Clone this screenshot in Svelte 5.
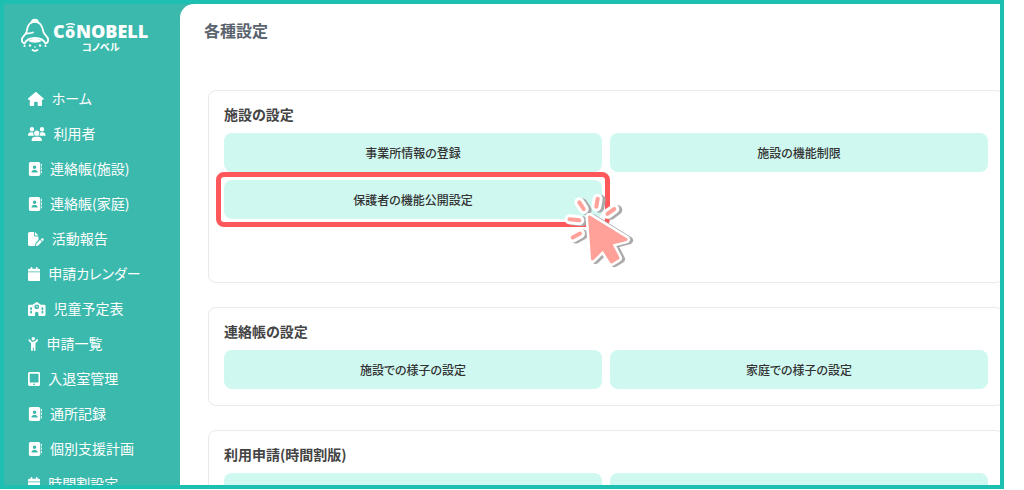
<script>
  const icons = {
    house: {
      width: 576,
      path: "M575.8 255.5c0 18-15 32.1-32 32.1h-32l.7 160.2c0 2.7-.2 5.4-.5 8.1V472c0 22.1-17.9 40-40 40H456c-1.1 0-2.2 0-3.3-.1c-1.4 .1-2.8 .1-4.2 .1H416 392c-22.1 0-40-17.9-40-40V448 384c0-17.7-14.3-32-32-32H256c-17.7 0-32 14.3-32 32v64 24c0 22.1-17.9 40-40 40H160 128.1c-1.5 0-3-.1-4.5-.2c-1.2 .1-2.4 .2-3.6 .2H104c-22.1 0-40-17.9-40-40V360c0-.9 0-1.9 .1-2.8V287.6H32c-18 0-32-14-32-32.1c0-9 3-17 10-24L266.4 8c7-7 15-8 22-8s15 2 21 7L564.8 231.5c8 7 12 15 11 24z",
    },
    users: {
      width: 640,
      path: "M144 0a80 80 0 1 1 0 160A80 80 0 1 1 144 0zM512 0a80 80 0 1 1 0 160A80 80 0 1 1 512 0zM0 298.7C0 239.8 47.8 192 106.7 192h42.7c15.9 0 31 3.5 44.6 9.7c-1.3 7.2-1.9 14.7-1.9 22.3c0 38.2 16.8 72.5 43.3 96c-.2 0-.4 0-.7 0H21.3C9.6 320 0 310.4 0 298.7zM405.3 320c-.2 0-.4 0-.7 0c26.6-23.5 43.3-57.8 43.3-96c0-7.6-.7-15-1.9-22.3c13.6-6.3 28.7-9.7 44.6-9.7h42.7C592.2 192 640 239.8 640 298.7c0 11.8-9.6 21.3-21.3 21.3H405.3zM224 224a96 96 0 1 1 192 0 96 96 0 1 1 -192 0zM128 485.3C128 411.7 187.7 352 261.3 352H378.7C452.3 352 512 411.7 512 485.3c0 14.7-11.9 26.7-26.7 26.7H154.7c-14.7 0-26.7-11.9-26.7-26.7z",
    },
    book: {
      width: 512,
      path: "M96 0C60.7 0 32 28.7 32 64V448c0 35.3 28.7 64 64 64H384c35.3 0 64-28.7 64-64V64c0-35.3-28.7-64-64-64H96zM208 288h64c44.2 0 80 35.8 80 80c0 8.8-7.2 16-16 16H144c-8.8 0-16-7.2-16-16c0-44.2 35.8-80 80-80zm-32-96a64 64 0 1 1 128 0 64 64 0 1 1 -128 0zM512 80c0-8.8-7.2-16-16-16s-16 7.2-16 16v64c0 8.8 7.2 16 16 16s16-7.2 16-16V80zM496 192c-8.8 0-16 7.2-16 16v64c0 8.8 7.2 16 16 16s16-7.2 16-16V208c0-8.8-7.2-16-16-16zm16 144c0-8.8-7.2-16-16-16s-16 7.2-16 16v64c0 8.8 7.2 16 16 16s16-7.2 16-16V336z",
    },
    filePen: {
      width: 576,
      path: "M0 64C0 28.7 28.7 0 64 0H224V128c0 17.7 14.3 32 32 32H384V285.7l-86.8 86.8c-10.3 10.3-17.5 23.1-21 37.2l-18.7 74.9c-2.3 9.2-1.8 18.8 1.3 27.5H64c-35.3 0-64-28.7-64-64V64zm384 64H256V0L384 128zM549.8 235.7l14.4 14.4c15.6 15.6 15.6 40.9 0 56.6l-29.4 29.4-71-71 29.4-29.4c15.6-15.6 40.9-15.6 56.6 0zM311.9 417L441.1 287.8l71 71L382.9 487.9c-4.1 4.1-9.2 7-14.9 8.4l-60.1 15c-5.5 1.4-11.2-.2-15.2-4.2s-5.6-9.7-4.2-15.2l15-60.1c1.4-5.6 4.3-10.8 8.4-14.9z",
    },
    calendar: {
      width: 448,
      path: "M96 32V64H48C21.5 64 0 85.5 0 112v48H448V112c0-26.5-21.5-48-48-48H352V32c0-17.7-14.3-32-32-32s-32 14.3-32 32V64H160V32c0-17.7-14.3-32-32-32S96 14.3 96 32zM448 192H0V464c0 26.5 21.5 48 48 48H400c26.5 0 48-21.5 48-48V192z",
    },
    school: {
      width: 640,
      path: "M337.8 5.4C327-1.8 313-1.8 302.2 5.4L166.3 96H48C21.5 96 0 117.5 0 144V464c0 26.5 21.5 48 48 48H256V416c0-35.3 28.7-64 64-64s64 28.7 64 64v96H592c26.5 0 48-21.5 48-48V144c0-26.5-21.5-48-48-48H473.7L337.8 5.4zM96 192h32c8.8 0 16 7.2 16 16v64c0 8.8-7.2 16-16 16H96c-8.8 0-16-7.2-16-16V208c0-8.8 7.2-16 16-16zm400 16c0-8.8 7.2-16 16-16h32c8.8 0 16 7.2 16 16v64c0 8.8-7.2 16-16 16H512c-8.8 0-16-7.2-16-16V208zM96 320h32c8.8 0 16 7.2 16 16v64c0 8.8-7.2 16-16 16H96c-8.8 0-16-7.2-16-16V336c0-8.8 7.2-16 16-16zm400 16c0-8.8 7.2-16 16-16h32c8.8 0 16 7.2 16 16v64c0 8.8-7.2 16-16 16H512c-8.8 0-16-7.2-16-16V336zM232 176a88 88 0 1 1 176 0 88 88 0 1 1 -176 0zm88-48c-8.8 0-16 7.2-16 16v32c0 8.8 7.2 16 16 16h32c8.8 0 16-7.2 16-16s-7.2-16-16-16H336V144c0-8.8-7.2-16-16-16z",
    },
    child: {
      width: 384,
      path: "M256 64A64 64 0 1 0 128 64a64 64 0 1 0 128 0zM152.9 169.3c-23.7-8.4-44.5-24.3-58.8-45.8L74.6 94.2C64.8 79.5 45 75.6 30.2 85.4s-18.7 29.7-8.9 44.4L40.9 159c18.1 27.1 42.8 48.4 71.1 62.4V480c0 17.7 14.3 32 32 32s32-14.3 32-32V384h32v96c0 17.7 14.3 32 32 32s32-14.3 32-32V221.6c29.1-14.2 54.4-36.2 72.7-64.2l18.2-27.9c9.6-14.8 5.4-34.6-9.4-44.3s-34.6-5.5-44.3 9.4L291 122.4c-21.8 33.4-58.9 53.6-98.8 53.6c-12.6 0-24.9-2-36.6-5.8c-.9-.3-1.8-.7-2.7-.9z",
    },
    tablet: {
      width: 448,
      path: "M0 64C0 28.7 28.7 0 64 0H384c35.3 0 64 28.7 64 64V448c0 35.3-28.7 64-64 64H64c-35.3 0-64-28.7-64-64V64zM256 448a32 32 0 1 0 -64 0 32 32 0 1 0 64 0zM384 64H64V384H384V64z",
    },
  };

  const menu = [
    { icon: "house", label: "ホーム" },
    { icon: "users", label: "利用者" },
    { icon: "book", label: "連絡帳(施設)" },
    { icon: "book", label: "連絡帳(家庭)" },
    { icon: "filePen", label: "活動報告" },
    { icon: "calendar", label: "申請カレンダー" },
    { icon: "school", label: "児童予定表" },
    { icon: "child", label: "申請一覧" },
    { icon: "tablet", label: "入退室管理" },
    { icon: "book", label: "通所記録" },
    { icon: "book", label: "個別支援計画" },
    { icon: "calendar", label: "時間割設定" },
  ];

  const sections = [
    {
      title: "施設の設定",
      tall: true,
      items: ["事業所情報の登録", "施設の機能制限", "保護者の機能公開設定"],
    },
    {
      title: "連絡帳の設定",
      items: ["施設での様子の設定", "家庭での様子の設定"],
    },
    {
      title: "利用申請(時間割版)",
      items: ["利用申請(時間割版)の設定", "時間割の設定"],
    },
  ];

  const highlighted = "保護者の機能公開設定";
</script>

{#snippet arrow()}
  <path d="M29.500 26L66 48.500L50.500 52.500L58 67L51.500 71L43 57.500L32.500 68Z" />
{/snippet}

{#snippet rays()}
  <path
    d="M19.300 11.300L23.700 18M37.700 7.700L36.300 15.700M54.300 18L47.500 22.800M9.500 28.300L19.300 29.300M12.700 46.500L20 42.500"
  />
{/snippet}

<div class="frame">
  <aside>
    <a class="logo" href="/" aria-label="コノベル">
      <svg viewBox="0 0 128 36" width="128" height="36">
        <g fill="none" stroke="#fff" stroke-width="1.8" stroke-linecap="round">
          <path
            d="M10.500 4.500C10.500 .8 17 .8 17 4.500C21 6 21.500 10 22.500 14C23.500 17.500 27.200 18.500 27.200 22C27.200 24 26 25 24.500 25.500M3.500 25.500C2 25 .8 24 .8 22C.8 18.500 4.500 17.500 5.500 14C6.500 10 6.500 6 10.500 4.500"
          />
          <path d="M10.500 4.500Q14 3 17 4.500M5.500 15.500Q9 15.500 12 14.500" />
          <path d="M3.500 25.500Q6 20 14 20Q22 20 24.500 25.500M11.500 32Q14 33.800 16.500 32" />
        </g>
        <g fill="#fff">
          <path d="M7 23Q14 18.500 21 23Q18 24.800 14 24.800Q10 24.800 7 23Z" />
          <circle cx="9" cy="27.500" r="1.200" />
          <circle cx="19" cy="27.500" r="1.200" />
          <circle cx="14" cy="29" r=".8" />
          <circle cx="3.500" cy="28" r="1.100" />
          <circle cx="24.500" cy="28" r="1.100" />
        </g>
        <g class="wordmark">
          <text x="32" y="20">C</text>
          <text class="small" x="44" y="20">o</text>
          <text x="55" y="20">NOBELL</text>
          <text class="kana" x="61" y="33">コノベル</text>
        </g>
        <path
          d="M45 7Q49.500 4.500 54 7M46.500 9.500Q49.500 8 52.500 9.500"
          fill="none"
          stroke="#fff"
          stroke-width="1.4"
        />
      </svg>
    </a>
    <nav>
      {#each menu as item}
        <a href="/">
          <svg viewBox="0 0 {icons[item.icon].width} 512" height="14">
            <path d={icons[item.icon].path} fill-rule="evenodd" />
          </svg>
          <span>{item.label}</span>
        </a>
      {/each}
    </nav>
  </aside>

  <main>
    <h1>各種設定</h1>
    {#each sections as section}
      <section class:tall={section.tall}>
        <h2>{section.title}</h2>
        <div class="grid">
          {#each section.items as item}
            <div class="cell">
              <button type="button">{item}</button>
              {#if item === highlighted}
                <span class="highlight"></span>
                <svg class="pointer" viewBox="0 0 80 80" width="80" height="80">
                  <g class="shadow" transform="translate(3 1)">
                    {@render arrow()}
                    <g class="ray">{@render rays()}</g>
                  </g>
                  <g class="outline">
                    {@render arrow()}
                    <g class="ray">{@render rays()}</g>
                  </g>
                  <g class="fill">
                    {@render arrow()}
                    <g class="ray">{@render rays()}</g>
                  </g>
                </svg>
              {/if}
            </div>
          {/each}
        </div>
      </section>
    {/each}
  </main>
</div>

<style>
  :global(body) {
    background: #fff;
    font-family: "Noto Sans CJK JP", sans-serif;
    font-feature-settings: "palt";
  }

  .frame {
    box-sizing: border-box;
    display: flex;
    height: calc(100vh - 1px);
    margin-right: 20px;
    overflow: hidden;
    border: 4px solid #1cbfb1;
    background: #3cb9ad;
  }

  aside {
    flex: 0 0 176px;
  }

  a {
    color: #fff;
    text-decoration: none;
  }

  .logo {
    display: block;
    height: 36px;
    padding: 14px 0 27px 17px;
  }

  .logo svg {
    display: block;
  }

  .wordmark {
    fill: #fff;
    font-family: "Open Sans", sans-serif;
    font-size: 18px;
    font-weight: 800;
  }

  .wordmark .small {
    font-size: 16px;
  }

  .wordmark .kana {
    font-family: "Noto Sans CJK JP", sans-serif;
    font-size: 10px;
    font-weight: 700;
  }

  nav a {
    display: flex;
    align-items: center;
    gap: 8px;
    height: 35px;
    padding-left: 24px;
    font-size: 14px;
    line-height: 20px;
  }

  nav svg {
    fill: #fff;
  }

  nav span {
    padding-bottom: 2px;
  }

  main {
    flex: 1;
    min-width: 0;
    padding-left: 28px;
    border-top-left-radius: 14px;
    background: #fff;
  }

  h1,
  h2 {
    margin: 0;
    font-weight: 700;
  }

  h1 {
    padding: 14px 0 48px;
    margin-left: -4px;
    color: #5b636e;
    font-size: 16px;
    line-height: 24px;
  }

  section {
    margin: 0 -4px 24px 0;
    padding: 13px 15px 16px;
    border: 1px solid #e9eaee;
    border-radius: 8px;
  }

  h2 {
    margin-bottom: 9px;
    color: #444;
    font-size: 14px;
    line-height: 20px;
  }

  .grid {
    display: grid;
    grid-template-columns: 1fr 1fr;
    grid-auto-rows: 39px;
    gap: 8px;
  }

  .tall .grid {
    grid-template-rows: repeat(3, 39px);
  }

  .cell {
    position: relative;
  }

  button {
    width: 100%;
    height: 100%;
    padding: 0 6px;
    border: none;
    border-radius: 8px;
    background: #cff8f0;
    color: #333;
    font: inherit;
    font-feature-settings: "palt";
    font-size: 12px;
    font-weight: 500;
    cursor: pointer;
  }

  .highlight {
    position: absolute;
    inset: -8px;
    border: 5px solid #ff575a;
    border-radius: 8px;
    pointer-events: none;
  }

  .pointer {
    position: absolute;
    top: 11px;
    right: -38px;
    z-index: 1;
    pointer-events: none;
  }

  .pointer g {
    stroke-linecap: round;
    stroke-linejoin: round;
  }

  .shadow {
    fill: #aaa;
    stroke: #aaa;
    stroke-width: 8px;
  }

  .outline {
    fill: #fff;
    stroke: #fff;
    stroke-width: 8px;
  }

  .fill {
    fill: #ffa199;
    stroke: #ffa199;
    stroke-width: 3px;
  }

  .shadow .ray,
  .outline .ray {
    stroke-width: 10px;
  }

  .fill .ray {
    stroke-width: 4px;
  }
</style>
